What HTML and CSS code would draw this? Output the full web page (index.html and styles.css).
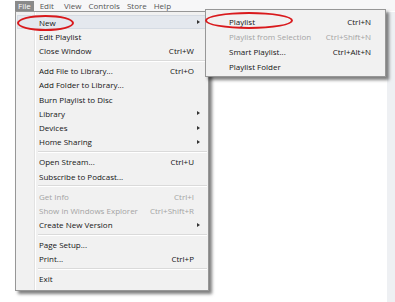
FILE: index.html
```html
<!DOCTYPE html>
<html lang="en">

<head>
    <meta charset="UTF-8">
    <title>File menu</title>
    <link rel="stylesheet" href="styles.css">
</head>

<body>
    <div class="window">
        <div class="menubar">
            <span class="top active">File</span>
            <span class="top wide">Edit</span>
            <span class="top">View</span>
            <span class="top">Controls</span>
            <span class="top">Store</span>
            <span class="top">Help</span>
        </div>
        <div class="side-strip"></div>

        <!-- File dropdown -->
        <div class="menu main-menu">
            <div class="item hover"><span class="label">New</span><span class="arrow"></span></div>
            <div class="item"><span class="label">Edit Playlist</span></div>
            <div class="item"><span class="label">Close Window</span><span class="key">Ctrl+W</span></div>
            <div class="sep"></div>
            <div class="item"><span class="label">Add File to Library...</span><span class="key">Ctrl+O</span></div>
            <div class="item"><span class="label">Add Folder to Library...</span></div>
            <div class="item"><span class="label">Burn Playlist to Disc</span></div>
            <div class="item"><span class="label">Library</span><span class="arrow"></span></div>
            <div class="item"><span class="label">Devices</span><span class="arrow"></span></div>
            <div class="item"><span class="label">Home Sharing</span><span class="arrow"></span></div>
            <div class="sep"></div>
            <div class="item"><span class="label">Open Stream...</span><span class="key">Ctrl+U</span></div>
            <div class="item"><span class="label">Subscribe to Podcast...</span></div>
            <div class="sep"></div>
            <div class="item disabled"><span class="label">Get Info</span><span class="key">Ctrl+I</span></div>
            <div class="item disabled"><span class="label">Show in Windows Explorer</span><span class="key">Ctrl+Shift+R</span></div>
            <div class="item"><span class="label">Create New Version</span><span class="arrow"></span></div>
            <div class="sep"></div>
            <div class="item"><span class="label">Page Setup...</span></div>
            <div class="item"><span class="label">Print...</span><span class="key">Ctrl+P</span></div>
            <div class="sep"></div>
            <div class="item"><span class="label">Exit</span></div>
        </div>

        <!-- New submenu -->
        <div class="menu sub-menu">
            <div class="item"><span class="label">Playlist</span><span class="key">Ctrl+N</span></div>
            <div class="item disabled"><span class="label">Playlist from Selection</span><span class="key">Ctrl+Shift+N</span></div>
            <div class="item"><span class="label">Smart Playlist...</span><span class="key">Ctrl+Alt+N</span></div>
            <div class="item"><span class="label">Playlist Folder</span></div>
        </div>

        <div class="circle circle-new"></div>
        <div class="circle circle-playlist"></div>
    </div>
</body>

</html>
```

FILE: styles.css
```css
body {
    margin: 0;
    background-color: #fff;
    font-family: "Open Sans", "Noto Sans", sans-serif;
    font-size: 8px;
    color: #151515;
}

.window {
    position: relative;
    width: 395px;
    height: 302px;
    overflow: hidden;
}

.menubar {
    display: flex;
    margin-left: 15px;
    height: 11px;
    background-color: #f7f7f8;
    align-items: center;
}

.top {
    padding: 0 4px 0 3px;
    line-height: 10px;
    color: #555;
}

.top.wide {
    padding-right: 7px;
}

.top.active {
    padding: 0 3px;
    margin-right: 3px;
    background-color: #8a8a8a;
    color: #fff;
}

.side-strip {
    position: absolute;
    right: 0;
    top: 12px;
    bottom: 0;
    width: 8px;
    background-color: #eef0f3;
}

.menu {
    position: absolute;
    background-color: #f1f1f1;
    border: 1px solid #979797;
    box-shadow: 3px 3px 3px rgba(0, 0, 0, 0.5);
    box-sizing: border-box;
}

.main-menu {
    left: 15px;
    top: 11px;
    width: 194px;
    height: 280px;
    padding: 3px 1px 2px;
    background-image: linear-gradient(to right, transparent 18px, #e2e2e2 18px, #e2e2e2 19px, #fff 19px, #fff 20px, transparent 20px);
}

.sub-menu {
    left: 205px;
    top: 9px;
    width: 181px;
    height: 68px;
    padding: 4px 1px;
}

.item {
    display: flex;
    align-items: center;
    height: 14.25px;
    padding: 0 13px 0 22px;
}

.sub-menu .item {
    height: 15px;
}

.item .label {
    flex: 1;
    white-space: nowrap;
}

.item .key {
    white-space: nowrap;
}

.item.hover {
    background-color: #e4e8ee;
    box-shadow: inset 0 0 0 1px #d5dbe3;
}

.item.disabled {
    color: #a4a4a4;
}

.arrow {
    width: 0;
    height: 0;
    margin-right: -6px;
    border-top: 2.5px solid transparent;
    border-bottom: 2.5px solid transparent;
    border-left: 3px solid #333;
}

.sep {
    height: 1px;
    margin: 1.75px 0 2px 21px;
    background-color: #dadada;
    border-bottom: 1px solid #fff;
}

.circle {
    position: absolute;
    border: 2px solid #d9191c;
    border-radius: 50%;
    box-sizing: border-box;
}

.circle-new {
    left: 17px;
    top: 15px;
    width: 57px;
    height: 16px;
}

.circle-playlist {
    left: 205px;
    top: 12px;
    width: 88px;
    height: 17px;
}
```
